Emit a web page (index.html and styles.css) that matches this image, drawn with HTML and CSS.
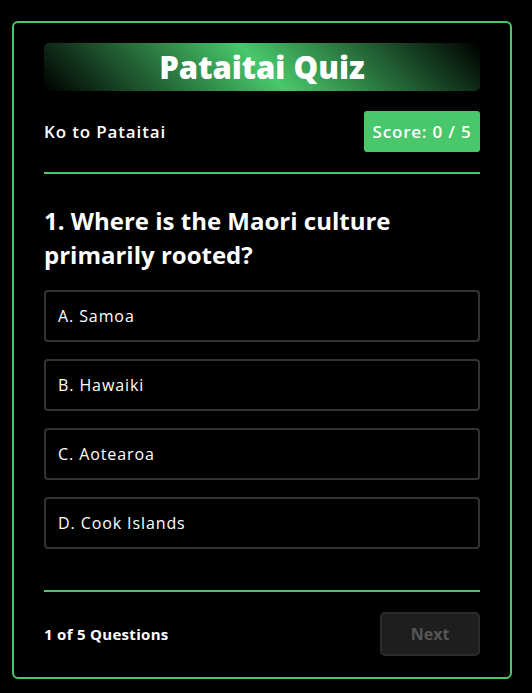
FILE: index.html
```html
<!DOCTYPE html>
<html lang="en">
<head>
<meta charset="utf-8">
<title>Pataitai Quiz</title>
<link rel="stylesheet" href="styles.css">
</head>
<body>
  <main class="card">
    <header class="title-bar">
      <h1 class="title">Pataitai Quiz</h1>
    </header>
    <div class="meta-row">
      <span class="subtitle">Ko to Pataitai</span>
      <span class="score">Score: 0 / 5</span>
    </div>
    <hr class="divider">
    <h2 class="question">1. Where is the Maori culture primarily rooted?</h2>
    <ul class="options">
      <li class="option">A. Samoa</li>
      <li class="option">B. Hawaiki</li>
      <li class="option">C. Aotearoa</li>
      <li class="option">D. Cook Islands</li>
    </ul>
    <hr class="divider divider-bottom">
    <footer class="footer">
      <span class="progress">1 of 5 Questions</span>
      <button class="next-btn" disabled>Next</button>
    </footer>
  </main>
</body>
</html>
```

FILE: styles.css
```css
* {
  box-sizing: border-box;
}

html, body {
  background: #000;
}

body {
  margin: 0;
  padding: 21px 20px 14px 12px;
  font-family: "Open Sans", "DejaVu Sans", sans-serif;
  color: #fff;
}

.card {
  width: 500px;
  border: 2px solid #48c86b;
  border-radius: 6px;
  padding: 20px 30px 21px;
  background: #000;
  display: flex;
  flex-direction: column;
}

.title-bar {
  height: 48px;
  border-radius: 5px;
  background: linear-gradient(45deg, #000 0%, #48c86b 50%, #000 100%);
  display: flex;
  align-items: center;
  justify-content: center;
}

.title {
  margin: 0;
  font-size: 31px;
  font-weight: 800;
  line-height: 48px;
  color: #fff;
}

.meta-row {
  margin-top: 20px;
  display: flex;
  align-items: center;
  justify-content: space-between;
}

.subtitle {
  font-size: 17px;
  font-weight: 600;
  letter-spacing: 0.85px;
}

.score {
  background: #48c86b;
  color: #fff;
  font-size: 17px;
  font-weight: 600;
  letter-spacing: 0.8px;
  line-height: 25px;
  padding: 8px 0;
  border-radius: 3px;
  width: 116px;
  text-align: center;
}

.divider {
  margin: 20px 0 0;
  border: 0;
  height: 2px;
  background: #48c86b;
}

.question {
  margin: 30px 0 18px;
  font-size: 24px;
  font-weight: 700;
  line-height: 34px;
}

.options {
  list-style: none;
  margin: 0;
  padding: 0;
  display: flex;
  flex-direction: column;
  gap: 17px;
}

.option {
  height: 52px;
  border: 2px solid #333;
  border-radius: 4px;
  padding: 0 12px;
  display: flex;
  align-items: center;
  font-size: 16px;
  font-weight: 400;
  letter-spacing: 0.9px;
}

.divider-bottom {
  margin-top: 41px;
}

.footer {
  margin-top: 20px;
  display: flex;
  align-items: center;
  justify-content: space-between;
}

.progress {
  font-size: 15px;
  font-weight: 700;
  letter-spacing: 0.3px;
}

.next-btn {
  width: 100px;
  height: 44px;
  background: #1e1e1e;
  border: 2px solid #2b2b2b;
  border-radius: 5px;
  color: #555;
  font-family: inherit;
  font-size: 16px;
  font-weight: 700;
}
```
